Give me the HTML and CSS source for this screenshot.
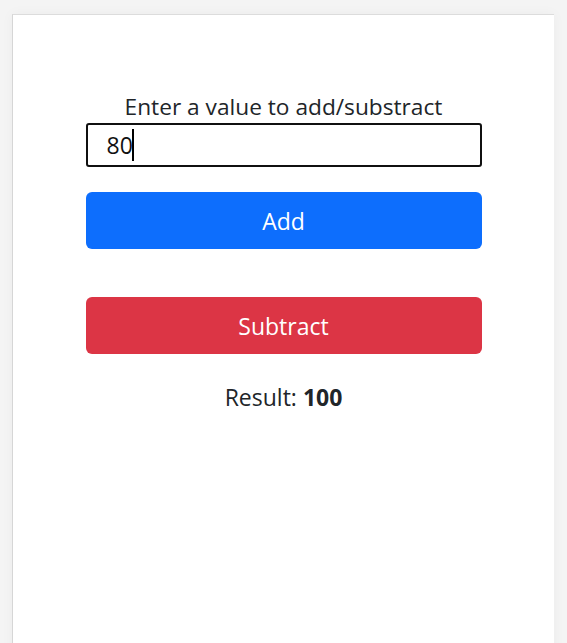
FILE: index.html
```html
<!DOCTYPE html>
<html lang="en">
<head>
<meta charset="utf-8">
<title>Add / Subtract</title>
<link rel="stylesheet" href="styles.css">
</head>
<body>
<main class="card">
  <form class="calc">
    <label class="calc-label" for="amount">Enter a value to add/substract</label>
    <div class="field">
      <input class="calc-input" id="amount" type="text" value="80" autofocus>
      <span class="caret"></span>
    </div>
    <button class="btn btn-add" type="button">Add</button>
    <button class="btn btn-sub" type="button">Subtract</button>
    <p class="result">Result: <strong>100</strong></p>
  </form>
</main>
</body>
</html>
```
FILE: styles.css
```css
html, body {
  margin: 0;
  padding: 0;
  height: 100%;
}
body {
  background: #f4f4f4;
  font-family: "Open Sans", "Noto Sans", sans-serif;
  color: #212529;
  padding: 14px 13px 0 12px;
  box-sizing: border-box;
  overflow: hidden;
}
.card {
  background: #fff;
  border-top: 1px solid #dcdcdc;
  border-left: 1px solid #d6d6d6;
  box-shadow: 0 0 12px rgba(0, 0, 0, 0.04);
  height: 640px;
  box-sizing: border-box;
  padding-top: 76px;
}
.calc {
  width: 396px;
  margin: 0 auto;
  display: flex;
  flex-direction: column;
  align-items: stretch;
}
.calc-label {
  font-size: 22.7px;
  line-height: 32px;
  height: 32px;
  text-align: center;
}
.field {
  position: relative;
  margin-bottom: 25px;
}
.calc-input {
  display: block;
  width: 100%;
  height: 44px;
  box-sizing: border-box;
  border: 2px solid #101010;
  border-radius: 3px;
  font-family: inherit;
  font-size: 23px;
  padding: 0 19px;
  color: #111;
  outline: none;
  caret-color: transparent;
  margin: 0;
}
.caret {
  position: absolute;
  left: 46px;
  top: 6px;
  width: 2px;
  height: 32px;
  background: #000;
}
.btn {
  height: 57px;
  border: 0;
  border-radius: 6px;
  color: #fff;
  font-family: inherit;
  font-size: 23px;
  cursor: pointer;
}
.btn-add {
  background: #0d6efd;
  margin-bottom: 48px;
}
.btn-sub {
  background: #dc3545;
}
.result {
  margin: 28px 0 0;
  font-size: 23px;
  line-height: 30px;
  text-align: center;
}
.result strong {
  font-weight: 700;
}
```
